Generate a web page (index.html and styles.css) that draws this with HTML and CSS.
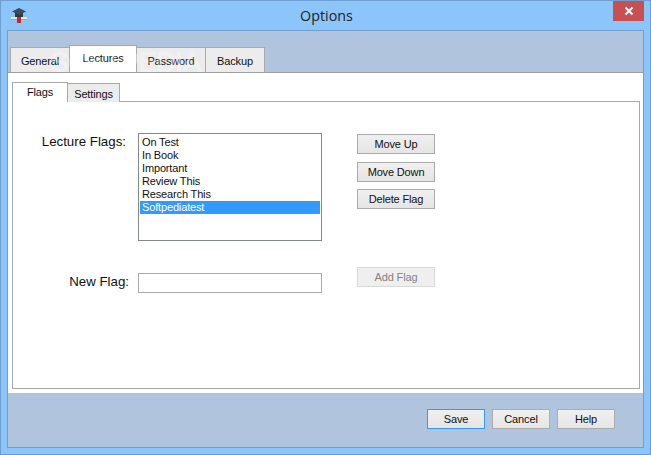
FILE: index.html
```html
<!DOCTYPE html>
<html lang="en">
<head>
<meta charset="utf-8">
<title>Options</title>
<link rel="stylesheet" href="styles.css">
</head>
<body>
<div class="window">
  <header class="titlebar">
    <svg class="app-icon" width="18" height="16" viewBox="0 0 18 16">
      <rect x="1" y="9" width="16" height="3" fill="#f3e6c4"/>
      <rect x="1" y="11" width="16" height="1" fill="#b9a57a"/>
      <rect x="7" y="9" width="4" height="6" fill="#d5232a"/>
      <path d="M5 5h8v4H5z" fill="#2c3a47"/>
      <path d="M9 0l7 3.500L9 7 2 3.500z" fill="#3a4b5c"/>
      <rect x="15" y="4" width="1" height="5" fill="#e0b040"/>
    </svg>
    <h1 class="title">Options</h1>
    <button class="close" aria-label="Close">
      <svg width="10" height="10" viewBox="0 0 10 10"><path d="M1.500 1.500l7 7M8.500 1.500l-7 7" stroke="#fff" stroke-width="2" fill="none"/></svg>
    </button>
  </header>
  <main class="client">
    <nav class="tabs">
      <span class="tab tab-general">General</span>
      <span class="tab tab-lectures active">Lectures</span>
      <span class="tab tab-password">Password</span>
      <span class="tab tab-backup">Backup</span>
    </nav>
    <span class="watermark" aria-hidden="true">SOFTPEDIA</span>
    <section class="pane">
      <nav class="subtabs">
        <span class="subtab sub-flags active">Flags</span>
        <span class="subtab sub-settings">Settings</span>
      </nav>
      <div class="subpane">
        <div class="form">
          <label class="label label-flags">Lecture Flags:</label>
          <ul class="listbox">
            <li>On Test</li>
            <li>In Book</li>
            <li>Important</li>
            <li>Review This</li>
            <li>Research This</li>
            <li class="selected">Softpediatest</li>
          </ul>
          <div class="actions">
            <button class="btn">Move Up</button>
            <button class="btn">Move Down</button>
            <button class="btn">Delete Flag</button>
          </div>
          <label class="label label-new">New Flag:</label>
          <div class="input"></div>
          <button class="btn disabled add">Add Flag</button>
        </div>
      </div>
    </section>
    <footer class="footer">
      <button class="btn wide default">Save</button>
      <button class="btn wide">Cancel</button>
      <button class="btn wide">Help</button>
    </footer>
  </main>
</div>
</body>
</html>
```
FILE: styles.css
```css
* { box-sizing: border-box; }
html, body { margin: 0; padding: 0; }
body { width: 651px; height: 455px; overflow: hidden; font-family: "Liberation Sans", Arial, sans-serif; font-size: 11px; letter-spacing: -.15px; color: #111; }
.window { width: 651px; height: 455px; display: flex; flex-direction: column; background: #8cc5fa; border: 1px solid #6f9fd0; border-bottom-color: #6a9ccc; }
.titlebar { height: 29px; flex: none; display: flex; align-items: flex-start; position: relative; }
.app-icon { margin: 7px 0 0 9px; }
.title { position: absolute; left: 2px; right: 0; top: 6px; margin: 0; text-align: center; font: 400 14.300px/18px "Open Sans", sans-serif; letter-spacing: 0; color: #222; }
.close { position: absolute; top: 0; right: 6px; width: 31px; height: 20px; padding: 0; border: 0; background: #c75050; display: flex; align-items: center; justify-content: center; }
.client { position: relative; flex: 1; margin: 0 6px 6px; background: #b0c4de; border: 1px solid #6f9fd0; display: flex; flex-direction: column; }
.tabs { height: 41px; flex: none; display: flex; align-items: flex-end; padding-left: 2px; }
.tab { height: 25px; background: #ececec; border: 1px solid #a9a9a9; border-bottom: 0; display: flex; align-items: center; justify-content: center; padding-top: 2px; }
.tab-general { width: 60px; }
.tab-lectures { width: 68px; height: 27px; margin: 0 -1px; padding: 0 0 2px; position: relative; z-index: 1; }
.tab-password { width: 70px; }
.tab-backup { width: 60px; margin-left: -1px; }
.tab.active, .subtab.active { background: #fff; }
.watermark { position: absolute; left: 42px; top: 19px; font: 700 29px/24px "Liberation Sans", sans-serif; letter-spacing: -1.700px; color: rgba(255, 255, 255, .28); pointer-events: none; z-index: 2; }
.pane { height: 321px; flex: none; background: #fff; border-top: 1px solid #a0a0a0; padding: 8px 3px 0 4px; display: flex; flex-direction: column; }
.subtabs { height: 21px; flex: none; display: flex; align-items: flex-end; position: relative; z-index: 1; margin-bottom: -1px; }
.subtab { height: 19px; background: #ececec; border: 1px solid #a9a9a9; border-bottom: 0; display: flex; align-items: center; justify-content: center; padding-top: 1px; }
.sub-flags { width: 56px; height: 20px; background: #fff; padding: 0 0 2px; }
.sub-settings { width: 53px; margin-left: -1px; }
.subpane { width: 628px; height: 288px; flex: none; border: 1px solid #a9a9a9; background: #fff; padding: 31px 0 0; }
.form { display: grid; grid-template-columns: 125px 184px 113px; grid-template-rows: 108px 20px; row-gap: 32px; }
.label { font-size: 13.300px; letter-spacing: 0; line-height: 16px; justify-self: end; color: #111; }
.label-flags { margin: 1px 12px 0 0; }
.label-new { margin: 1px 9px 0 0; }
.listbox { list-style: none; margin: 0; padding: 2px 1px; border: 1px solid #828790; background: #fff; line-height: 13px; overflow: hidden; }
.listbox li { height: 13px; padding-left: 2px; white-space: nowrap; }
.listbox .selected { background: #3399ff; color: #fff; }
.input { border: 1px solid #ababab; background: #fff; }
.actions { display: flex; flex-direction: column; gap: 7px; margin: 1px 0 0 35px; align-items: flex-start; }
.btn { width: 78px; height: 20px; padding: 0; border: 1px solid #acacac; background: linear-gradient(#f0f0f0, #e5e5e5); font: 11px "Liberation Sans", Arial, sans-serif; letter-spacing: -.15px; color: #111; }
.actions .btn:nth-child(2) { margin-top: 1px; }
.add { margin: -6px 0 0 35px; }
.disabled { background: #efefef; border-color: #d9d9d9; color: #838383; }
.footer { flex: 1; display: flex; justify-content: flex-end; gap: 7px; padding: 16px 28px 0 0; align-items: flex-start; }
.wide { width: 58px; }
.default { border-color: #3399ff; }
```
